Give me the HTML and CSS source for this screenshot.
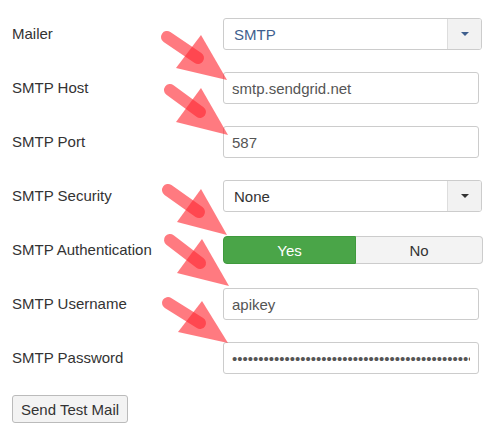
FILE: index.html
```html
<!DOCTYPE html>
<html lang="en">
<head>
  <meta charset="UTF-8" />
  <title>Mail Settings</title>
  <link rel="stylesheet" href="styles.css">
</head>
<body>
  <div class="page">
    <form class="form">
      <label class="label">Mailer</label>
      <div class="select select-blue">
        <span class="select-value">SMTP</span>
        <span class="select-caret"><i></i></span>
      </div>

      <label class="label">SMTP Host</label>
      <input class="input" type="text" value="smtp.sendgrid.net">

      <label class="label">SMTP Port</label>
      <input class="input" type="text" value="587">

      <label class="label">SMTP Security</label>
      <div class="select">
        <span class="select-value">None</span>
        <span class="select-caret"><i></i></span>
      </div>

      <label class="label">SMTP Authentication</label>
      <div class="toggle">
        <span class="toggle-btn active">Yes</span>
        <span class="toggle-btn">No</span>
      </div>

      <label class="label">SMTP Username</label>
      <input class="input" type="text" value="apikey">

      <label class="label">SMTP Password</label>
      <input class="input" type="password" value="aaaaaaaaaaaaaaaaaaaaaaaaaaaaaaaaaaaaaaaaaaaaaaaaaaaaaaaaaaaa">
    </form>

    <button class="test-btn" type="button">Send Test Mail</button>

    <!-- annotation arrows drawn over the form -->
    <svg class="arrows" width="499" height="430" viewBox="0 0 499 430">
      <g class="arrow" transform="translate(227 80)">
        <line x1="-60" y1="-43" x2="-29" y2="-22" />
        <polygon points="-26,-45 -51,-12 0,0" />
      </g>
      <g class="arrow" transform="translate(228 135)">
        <line x1="-58" y1="-45" x2="-28" y2="-23" />
        <polygon points="-27,-47 -52,-13 0,0" />
      </g>
      <g class="arrow" transform="translate(227 235)">
        <line x1="-59" y1="-45" x2="-28" y2="-23" />
        <polygon points="-26,-46 -50,-13 0,0" />
      </g>
      <g class="arrow" transform="translate(229 286)">
        <line x1="-59" y1="-46" x2="-29" y2="-23" />
        <polygon points="-27,-47 -52,-13 0,0" />
      </g>
      <g class="arrow" transform="translate(228 343)">
        <line x1="-60" y1="-40" x2="-28" y2="-20" />
        <polygon points="-26,-42 -50,-11 0,0" />
      </g>
    </svg>
  </div>
</body>
</html>
```

FILE: styles.css
```css
body {
  margin: 0;
  background: #fff;
  font-family: "Liberation Sans", Arial, sans-serif;
  font-size: 15px;
  color: #333;
}
.page {
  position: relative;
  width: 499px;
  height: 430px;
  padding: 18px 0 0 12px;
  box-sizing: border-box;
}
.form {
  display: grid;
  grid-template-columns: 211px 260px;
  grid-auto-rows: 32px;
  row-gap: 22px;
  align-items: center;
}
.label {
  color: #333;
  line-height: 18px;
}
.input {
  width: 256px;
  height: 32px;
  box-sizing: border-box;
  border: 1px solid #ccc;
  border-radius: 3px;
  padding: 0 8px;
  font-family: "Liberation Sans", Arial, sans-serif;
  font-size: 15px;
  color: #555;
  background: #fff;
  outline: none;
}
.select {
  width: 259px;
  height: 32px;
  box-sizing: border-box;
  border: 1px solid #ccc;
  border-radius: 3px;
  display: flex;
  align-items: stretch;
  background: #fff;
  overflow: hidden;
}
.select-value {
  flex: 1;
  display: flex;
  align-items: center;
  padding-left: 10px;
  color: #333;
}
.select-caret {
  width: 33px;
  border-left: 1px solid #ddd;
  background: #f2f2f2;
  display: flex;
  align-items: center;
  justify-content: center;
}
.select-caret i {
  width: 0;
  height: 0;
  border-left: 4px solid transparent;
  border-right: 4px solid transparent;
  border-top: 4px solid #333;
}
.select-blue .select-value {
  color: #3f5f8e;
}
.select-blue .select-caret i {
  border-top-color: #3f5f8e;
}
.toggle {
  width: 260px;
  height: 28px;
  display: flex;
}
.toggle-btn {
  flex: 1;
  display: flex;
  align-items: center;
  justify-content: center;
  background: #f3f3f3;
  border: 1px solid #ccc;
  border-left: none;
  border-radius: 0 4px 4px 0;
  color: #333;
}
.toggle-btn.active {
  flex: 0 0 131px;
  background: #4aa548;
  border: 1px solid #3f9a3d;
  border-radius: 4px 0 0 4px;
  color: #fff;
}
.test-btn {
  margin-top: 21px;
  height: 28px;
  padding: 0 8px;
  background: #f3f3f3;
  border: 1px solid #bbb;
  border-radius: 3px;
  font-family: "Liberation Sans", Arial, sans-serif;
  font-size: 15px;
  color: #333;
}
.arrows {
  position: absolute;
  left: 0;
  top: 0;
  pointer-events: none;
}
.arrow line {
  stroke: rgba(255, 40, 50, 0.62);
  stroke-width: 12;
  stroke-linecap: round;
}
.arrow polygon {
  fill: rgba(255, 40, 50, 0.62);
}
```
